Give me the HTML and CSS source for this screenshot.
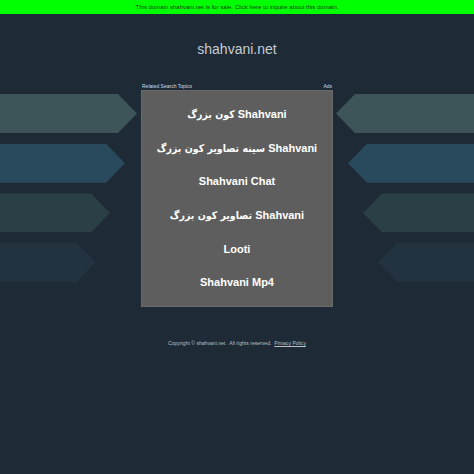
FILE: index.html
```html
<!DOCTYPE html>
<html>
<head>
<meta charset="utf-8">
<link rel="stylesheet" href="styles.css">
</head>
<body>
<div class="sale">This domain shahvani.net is for sale. Click here to inquire about this domain.</div>
<h1 class="title">shahvani.net</h1>
<div class="main">
  <div class="side left">
    <div class="arrow a1"></div>
    <div class="arrow a2"></div>
    <div class="arrow a3"></div>
    <div class="arrow a4"></div>
  </div>
  <div class="center">
    <div class="labels"><span>Related Search Topics</span><span>Ads</span></div>
    <div class="box">
      <a class="item" dir="rtl">Shahvani <span class="fa">کون بزرگ</span></a>
      <a class="item" dir="rtl">Shahvani <span class="fa">سینه تصاویر کون بزرگ</span></a>
      <a class="item">Shahvani Chat</a>
      <a class="item" dir="rtl">Shahvani <span class="fa">تصاویر کون بزرگ</span></a>
      <a class="item">Looti</a>
      <a class="item">Shahvani Mp4</a>
    </div>
  </div>
  <div class="side right">
    <div class="arrow a1"></div>
    <div class="arrow a2"></div>
    <div class="arrow a3"></div>
    <div class="arrow a4"></div>
  </div>
</div>
<div class="footer">Copyright © shahvani.net.&nbsp; All rights reserved.&nbsp; <span class="pp">Privacy Policy</span></div>
</body>
</html>
```
FILE: styles.css
```css
html, body {
  margin: 0;
  padding: 0;
}
body {
  background: #1e2a35;
  font-family: "Liberation Sans", "DejaVu Sans", Arial, sans-serif;
  width: 474px;
  height: 474px;
  overflow: hidden;
}
.sale {
  background: #00ff00;
  height: 14px;
  line-height: 14px;
  font-size: 6px;
  color: #1a3a1a;
  text-align: center;
}
.title {
  margin: 27px 0 0 0;
  height: 16px;
  line-height: 16px;
  font-size: 14px;
  font-weight: normal;
  color: #c5ccd3;
  text-align: center;
}
.main {
  margin-top: 25px;
  display: flex;
}
.side {
  width: 141px;
  padding-top: 12px;
  display: flex;
  flex-direction: column;
  gap: 10.7px;
}
.left { align-items: flex-start; }
.right { align-items: flex-end; }
.arrow {
  height: 39px;
}
.left .arrow {
  clip-path: polygon(0 0, calc(100% - 19px) 0, 100% 50%, calc(100% - 19px) 100%, 0 100%);
}
.right .arrow {
  clip-path: polygon(19px 0, 100% 0, 100% 100%, 19px 100%, 0 50%);
}
.a1 { width: 137px; background: #3d5559; }
.a2 { width: 125px; background: #284a5c; }
.a3 { width: 110px; background: #2b3f46; }
.a4 { width: 96px; background: #22323f; }
.right .a1 { width: 138px; }
.right .a2 { width: 126px; }
.right .a3 { width: 111px; }
.right .a4 { width: 96px; }
.center {
  width: 192px;
}
.labels {
  height: 8px;
  display: flex;
  justify-content: space-between;
  align-items: center;
  font-size: 5px;
  color: #d8dde2;
  padding: 0 1px;
}
.box {
  background: #5e5e5e;
  border: 1px solid #6a6a6a;
  box-sizing: border-box;
  height: 217px;
  padding: 6px 0 7px;
  display: flex;
  flex-direction: column;
}
.item {
  height: 34px;
  display: flex;
  align-items: center;
  justify-content: center;
  gap: 0.28em;
  color: #ffffff;
  font-weight: bold;
  font-size: 11px;
}
.fa {
  font-family: "DejaVu Sans Condensed", "DejaVu Sans", sans-serif;
  font-size: 10.5px;
}
.footer {
  margin-top: 32px;
  text-align: center;
  font-size: 5.1px;
  color: #b9c0c7;
  line-height: 8px;
}
.pp {
  text-decoration: underline;
}
```
